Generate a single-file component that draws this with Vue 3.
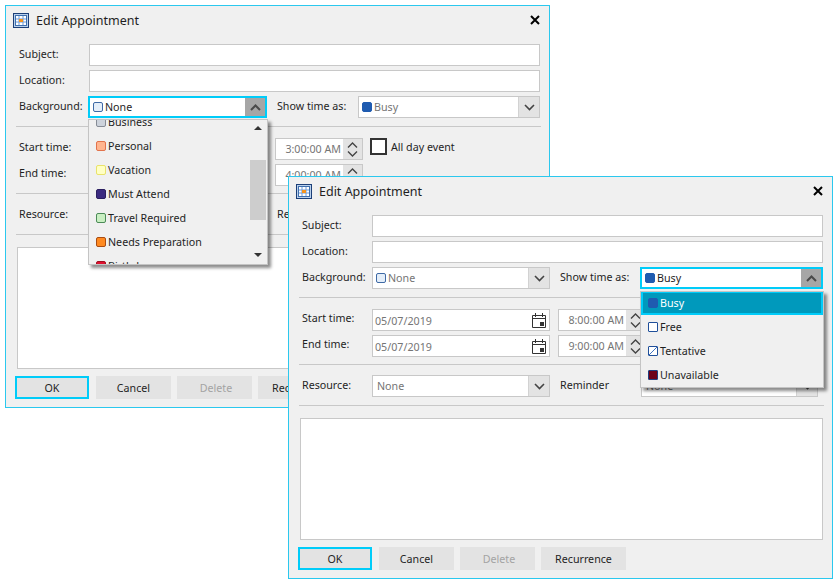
<script setup>
const bgOptions = [
  { name: 'Business', key: 'business' },
  { name: 'Personal', key: 'personal' },
  { name: 'Vacation', key: 'vacation' },
  { name: 'Must Attend', key: 'must' },
  { name: 'Travel Required', key: 'travel' },
  { name: 'Needs Preparation', key: 'prep' },
  { name: 'Birthday', key: 'birthday' }
]

const statusOptions = [
  { name: 'Busy', key: 'busy', selected: true },
  { name: 'Free', key: 'free' },
  { name: 'Tentative', key: 'tentative' },
  { name: 'Unavailable', key: 'unavailable' }
]

const dialogs = [
  { id: 'back', open: 'background', start: '3:00:00 AM', end: '4:00:00 AM' },
  { id: 'front', open: 'status', start: '8:00:00 AM', end: '9:00:00 AM' }
]
</script>

<template>
  <div class="desk">
    <section v-for="d in dialogs" :key="d.id" class="dialog" :class="d.id">
      <header class="titlebar">
        <svg class="app-icon" width="16" height="15" viewBox="0 0 16 15">
          <rect x="0.5" y="0.5" width="15" height="14" fill="#b9d0ec" stroke="#1c3f78" />
          <rect x="2.5" y="2.5" width="11" height="10" fill="#fff" stroke="#3f6fae" />
          <path d="M6 3v9M10 3v9M3 6h10M3 9h10" stroke="#6f9bd8" fill="none" />
          <rect x="6" y="6" width="4" height="3" fill="#f7941d" />
        </svg>
        <span class="title">Edit Appointment</span>
        <svg class="close" width="10" height="10" viewBox="0 0 10 10">
          <path d="M1 1l8 8M9 1l-8 8" stroke="#000" stroke-width="2" fill="none" />
        </svg>
      </header>

      <div class="form">
        <div class="row">
          <label class="lbl">Subject:</label>
          <input class="field wide" type="text" />
        </div>
        <div class="row">
          <label class="lbl">Location:</label>
          <input class="field wide" type="text" />
        </div>
        <div class="row">
          <label class="lbl">Background:</label>
          <div class="combo narrow" :class="{ focused: d.open === 'background' }">
            <span class="swatch none"></span>
            <span class="value">None</span>
            <span class="arrow">
              <svg width="11" height="7" viewBox="0 0 11 7">
                <path :d="d.open === 'background' ? 'M1 6l4.5-4.5L10 6' : 'M1 1l4.5 4.5L10 1'" fill="none" />
              </svg>
            </span>
            <div v-if="d.open === 'background'" class="dropdown bg-list">
              <div class="items scrolled">
                <div v-for="o in bgOptions" :key="o.key" class="item">
                  <span class="swatch" :class="o.key"></span>{{ o.name }}
                </div>
              </div>
              <div class="scrollbar">
                <i class="tri up"></i>
                <i class="thumb"></i>
                <i class="tri down"></i>
              </div>
            </div>
          </div>
          <label class="lbl second">Show time as:</label>
          <div class="combo status" :class="{ focused: d.open === 'status' }">
            <span class="swatch busy"></span>
            <span class="value">Busy</span>
            <span class="arrow">
              <svg width="11" height="7" viewBox="0 0 11 7">
                <path :d="d.open === 'status' ? 'M1 6l4.5-4.5L10 6' : 'M1 1l4.5 4.5L10 1'" fill="none" />
              </svg>
            </span>
            <div v-if="d.open === 'status'" class="dropdown status-list">
              <div class="items lifted">
                <div v-for="o in statusOptions" :key="o.key" class="item" :class="{ selected: o.selected }">
                  <span class="swatch" :class="o.key"></span>{{ o.name }}
                </div>
              </div>
            </div>
          </div>
        </div>

        <hr class="sep first" />

        <div class="row">
          <label class="lbl high">Start time:</label>
          <div class="date narrow">
            <span class="value">05/07/2019</span>
            <svg width="14" height="15" viewBox="0 0 14 15">
              <path d="M.5 2.5h13v12H.5zM.5 5.5h13M3.5 0v4M10.5 0v4" fill="none" stroke="#333" />
              <rect x="8" y="9" width="4" height="4" fill="#333" />
            </svg>
          </div>
          <div class="time">
            <span class="value">{{ d.start }}</span>
            <span class="spin">
              <svg width="11" height="6" viewBox="0 0 11 6"><path d="M1 5.5l4.5-4.5L10 5.5" fill="none" /></svg>
              <svg width="11" height="6" viewBox="0 0 11 6"><path d="M1 .5L5.5 5 10 .5" fill="none" /></svg>
            </span>
          </div>
          <span class="check"></span>
          <label class="check-lbl">All day event</label>
        </div>
        <div class="row">
          <label class="lbl high">End time:</label>
          <div class="date narrow">
            <span class="value">05/07/2019</span>
            <svg width="14" height="15" viewBox="0 0 14 15">
              <path d="M.5 2.5h13v12H.5zM.5 5.5h13M3.5 0v4M10.5 0v4" fill="none" stroke="#333" />
              <rect x="8" y="9" width="4" height="4" fill="#333" />
            </svg>
          </div>
          <div class="time">
            <span class="value">{{ d.end }}</span>
            <span class="spin">
              <svg width="11" height="6" viewBox="0 0 11 6"><path d="M1 5.5l4.5-4.5L10 5.5" fill="none" /></svg>
              <svg width="11" height="6" viewBox="0 0 11 6"><path d="M1 .5L5.5 5 10 .5" fill="none" /></svg>
            </span>
          </div>
        </div>

        <hr class="sep second-sep" />

        <div class="row">
          <label class="lbl">Resource:</label>
          <div class="combo narrow">
            <span class="value plain">None</span>
            <span class="arrow">
              <svg width="11" height="7" viewBox="0 0 11 7"><path d="M1 1l4.5 4.5L10 1" fill="none" /></svg>
            </span>
          </div>
          <label class="lbl second">Reminder</label>
          <div class="combo reminder">
            <span class="value plain">None</span>
            <span class="arrow">
              <svg width="11" height="7" viewBox="0 0 11 7"><path d="M1 1l4.5 4.5L10 1" fill="none" /></svg>
            </span>
          </div>
        </div>

        <hr class="sep third" />

        <textarea class="notes"></textarea>

        <div class="buttons">
          <button class="btn ok">OK</button>
          <button class="btn">Cancel</button>
          <button class="btn" disabled>Delete</button>
          <button class="btn recur">Recurrence</button>
        </div>
      </div>
    </section>
  </div>
</template>

<style scoped>
.desk {
  position: relative;
  width: 837px;
  height: 584px;
  overflow: hidden;
  background: #fff;
  font-family: "Noto Sans", sans-serif;
  font-size: 10.7px;
  color: #1f1f1f;
}

.dialog {
  position: absolute;
  width: 545px;
  height: 403px;
  box-sizing: border-box;
  background: #f0f0f0;
  border: 1px solid #2bc8ee;
}
.dialog.back { left: 5px; top: 5px; }
.dialog.front { left: 288px; top: 176px; }

.titlebar {
  display: flex;
  align-items: center;
  height: 28px;
  padding: 0 9px 0 7px;
}
.app-icon { margin-right: 7px; }
.title { font-size: 12.5px; flex: 1; }

.form {
  padding: 10px 9px 0 13px;
}
.row {
  display: flex;
  align-items: center;
  height: 22px;
  margin-bottom: 4px;
}
.lbl {
  width: 70px;
  flex: none;
  margin-top: -3px;
}
.lbl.high { margin-top: -5px; }
.lbl.second {
  width: 81px;
  margin-left: 10px;
}

.field,
.notes,
.combo,
.date,
.time {
  box-sizing: border-box;
  background: #fff;
  border: 1px solid #c8c8c8;
  height: 22px;
  flex: none;
}
.field { padding: 0; outline: none; }
.wide { width: 451px; }
.narrow { width: 178px; }
.status { width: 182px; }
.reminder { width: 177px; }

.combo,
.date,
.time {
  display: flex;
  align-items: center;
}
.combo { position: relative; padding-left: 3px; }
.combo.focused {
  border: 2px solid #00ccf9;
  margin-left: -1px;
  z-index: 5;
}
.narrow.focused { width: 179px; }
.status.focused { width: 183px; }
.value { flex: 1; color: #757575; white-space: nowrap; }
.date .value { padding-top: 1px; }
.focused > .value { color: #1f1f1f; }
.value.plain { padding-left: 1px; }
.arrow {
  width: 20px;
  align-self: stretch;
  display: flex;
  align-items: center;
  justify-content: center;
  background: #e3e3e3;
  border-left: 1px solid #d2d2d2;
}
.arrow path { stroke: #444; stroke-width: 1.6; }
.focused > .arrow { background: #a6a6a6; border-left: 0; }
.focused > .arrow path { stroke: #4a4a4a; stroke-width: 2; }

.swatch {
  display: inline-block;
  box-sizing: border-box;
  flex: none;
  width: 10px;
  height: 10px;
  margin-right: 2px;
  border: 1px solid #1f4f9a;
  border-radius: 2px;
}
.swatch.none { background: #e4eef9; border-color: #3f6aa5; }
.swatch.business { background: #cdd3dc; border-color: #868c96; }
.swatch.personal { background: #ffb58f; border-color: #e2734c; }
.swatch.vacation { background: #ffffc4; border-color: #e9e36a; }
.swatch.must { background: #3b2b80; border-color: #2b1f60; }
.swatch.travel { background: #c9efc2; border-color: #4c8b58; }
.swatch.prep { background: #ff8a20; border-color: #a94c12; }
.swatch.birthday { background: #e0102f; border-color: #a0101f; }
.swatch.busy { background: #1f5bb0; border-color: #1f5bb0; }
.swatch.free { background: #fff; border-color: #1f4f9a; border-radius: 1px; }
.swatch.tentative {
  background: linear-gradient(135deg, #fff 44%, #3f74c0 44%, #3f74c0 56%, #fff 56%);
  border-color: #1f4f9a;
  border-radius: 1px;
}
.swatch.unavailable { background: #6d0019; border-color: #1f3f80; border-radius: 1px; }

.dropdown {
  position: absolute;
  box-sizing: border-box;
  display: flex;
  background: #f0f0f0;
  border: 1px solid #c4c4c4;
  box-shadow: 3px 3px 3px rgba(0, 0, 0, 0.45);
  overflow: hidden;
  z-index: 10;
}
.bg-list { left: -2px; top: 21px; width: 180px; height: 146px; }
.status-list { left: -2px; top: 22px; width: 184px; height: 97px; }
.items { flex: 1; }
.items.scrolled { margin-top: -10px; }
.items.lifted { margin-top: -1px; }
.item {
  display: flex;
  align-items: center;
  height: 24px;
  box-sizing: border-box;
  padding: 0 0 0 7px;
  white-space: nowrap;
}
.item.selected {
  background: #0099bc;
  border: 2px solid #00ccf9;
  padding: 0 0 0 5px;
  color: #fff;
}

.scrollbar {
  width: 17px;
  flex: none;
  position: relative;
}
.scrollbar .tri {
  position: absolute;
  left: 4px;
  width: 0;
  height: 0;
  border-left: 4px solid transparent;
  border-right: 4px solid transparent;
}
.tri.up { top: 6px; border-bottom: 4px solid #333; }
.tri.down { bottom: 7px; border-top: 4px solid #333; }
.thumb {
  position: absolute;
  left: 0;
  top: 40px;
  width: 16px;
  height: 60px;
  background: #cdcdcd;
}

.sep {
  height: 1px;
  border: 0;
  background: #c8c8c8;
  margin: 0 -1px 0 -3px;
}
.sep.first { margin-top: 8px; margin-bottom: 11px; }
.sep.second-sep { margin-top: 7px; margin-bottom: 10px; }
.sep.third { margin-top: 8px; margin-bottom: 12px; }

.date { padding-left: 2px; padding-right: 3px; margin-right: 8px; }
.time { width: 88px; padding-left: 6px; }
.time .value { text-align: right; padding-right: 2px; }
.spin {
  width: 19px;
  align-self: stretch;
  display: flex;
  flex-direction: column;
  align-items: center;
  justify-content: center;
  gap: 3px;
  background: #e3e3e3;
}
.spin path { stroke: #444; stroke-width: 1.4; }
.check {
  box-sizing: border-box;
  width: 17px;
  height: 17px;
  margin: -5px 4px 0 7px;
  background: #fff;
  border: 2px solid #333;
  flex: none;
}
.check-lbl { margin-top: -5px; white-space: nowrap; }

.notes {
  display: block;
  width: 523px;
  height: 122px;
  margin-left: -2px;
  padding: 0;
  outline: none;
  resize: none;
}

.buttons {
  display: flex;
  gap: 6px;
  margin: 7px 0 0 -4px;
}
.btn {
  box-sizing: border-box;
  width: 75px;
  height: 23px;
  padding: 0;
  background: #e3e3e3;
  border: 0;
  font: inherit;
  color: #1f1f1f;
}
.btn.ok { width: 74px; border: 2px solid #00ccf9; margin-right: 1px; }
.btn.recur { width: 85px; }
.btn:disabled { color: #a3a3a3; padding-left: 3px; }
</style>
